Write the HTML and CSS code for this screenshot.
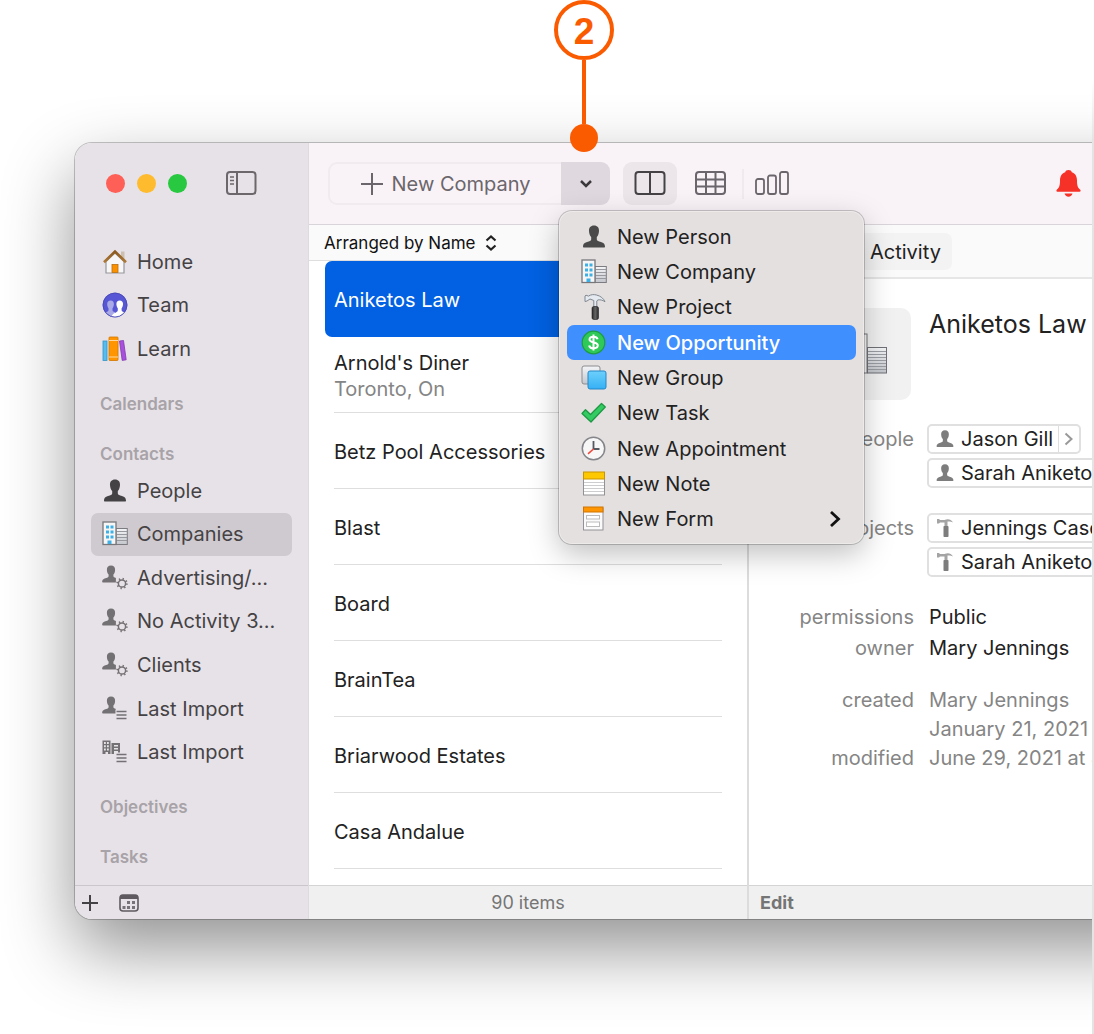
FILE: index.html
```html
<!DOCTYPE html>
<html lang="en">
<head>
<meta charset="utf-8">
<meta name="viewport" content="width=device-width, initial-scale=1">
<title>Companies</title>
<link rel="stylesheet" href="styles.css">
</head>
<body>
<svg class="sprite" aria-hidden="true">
  <defs>
    <linearGradient id="g-steel" x1="0" y1="0" x2="0" y2="1"><stop offset="0" stop-color="#f4f5f7"/><stop offset="1" stop-color="#c3c6cc"/></linearGradient>
    <linearGradient id="g-blue" x1="0" y1="0" x2="0" y2="1"><stop offset="0" stop-color="#6dd0fb"/><stop offset="1" stop-color="#35b0f5"/></linearGradient>
    <linearGradient id="g-roof" x1="0" y1="0" x2="0" y2="1"><stop offset="0" stop-color="#8a5a1e"/><stop offset="1" stop-color="#b07a38"/></linearGradient>
    <linearGradient id="g-handle" x1="0" y1="0" x2="1" y2="0"><stop offset="0" stop-color="#2a2a2a"/><stop offset=".5" stop-color="#666"/><stop offset="1" stop-color="#2a2a2a"/></linearGradient>
    <clipPath id="c-team"><circle cx="13" cy="13" r="12"/></clipPath>
  </defs>
  <symbol id="person" viewBox="0 0 26 26"><path d="M13 1.500c3.400 0 5.200 2.200 5 5.600-.1 2.600-.9 4.700-2.200 6v2.200c0 1.400 1.200 1.900 3.200 2.500 3 .9 4.800 1.600 5 4.700 0 .6-.3 1-1 1H3c-.7 0-1-.4-1-1 .2-3.100 2-3.800 5-4.700 2-.6 3.200-1.100 3.200-2.500v-2.200C8.900 11.800 8.100 9.700 8 7.100 7.800 3.700 9.600 1.500 13 1.500z" fill="currentColor"/></symbol>
  <symbol id="company" viewBox="0 0 26 26">
    <rect x="14" y="7.500" width="11.300" height="16" fill="url(#g-steel)" stroke="#7b7b80"/>
    <path d="M14.500 10.500h10.500M14.500 13.500h10.500M14.500 16.500h10.500M14.500 19.500h10.500" stroke="#97999f"/>
    <rect x="1" y="1" width="13" height="22.500" fill="#f6f6f6" stroke="#77777b" stroke-width="1.300"/>
    <path d="M4 4.500h3v3H4zM8.500 4.500h3v3h-3zM4 9.500h3v3H4zM8.500 9.500h3v3h-3zM4 14.500h3v3H4zM8.500 14.500h3v3h-3zM5.500 19.500h4V23h-4z" fill="#3fb0e6"/>
  </symbol>
  <symbol id="hammer" viewBox="0 0 26 26">
    <path d="M4 2 5 1.200l2.500.9C10 .3 13 .4 15.500 1c4 1 7 3.200 8.500 6.800-2.500-1.800-4.500-2.200-7-1.900l-1.200 1V13h-3V6.500L9 5 6 7 4 7.500z" fill="#e4eaf0" stroke="#7f8790" stroke-width="1"/>
    <rect x="11" y="12.500" width="6.500" height="13" rx="1.800" fill="url(#g-handle)" stroke="#222" stroke-width=".6"/>
  </symbol>
  <symbol id="hammer-flat" viewBox="0 0 20 20"><path d="M2 1h2l1 1h4.500C13 .7 16 1.200 18 4.500c-2-1-3.500-1.100-5.500-.9V8h-3V4.500H5l-1 .9H2z" fill="#a4a4a4"/><rect x="8.500" y="8" width="5" height="11" rx=".8" fill="#7d7d7d"/></symbol>
  <symbol id="dollar" viewBox="0 0 26 26"><circle cx="12.500" cy="12.500" r="11.300" fill="#2fc95a" stroke="#1e9c42" stroke-width="1.200"/><path d="M16.600 9.300c-.5-1.700-2-2.600-4.100-2.600-2.300 0-4 1.100-4 2.900 0 4 8.300 1.700 8.300 5.700 0 1.900-1.800 3.100-4.300 3.100-2.400 0-4-1-4.400-2.900M12.500 4.500v16" fill="none" stroke="#fff" stroke-width="2"/></symbol>
  <symbol id="group" viewBox="0 0 26 26"><rect x="1" y="1" width="18" height="18" rx="2" fill="url(#g-steel)" stroke="#8c8c90"/><rect x="7" y="6" width="18" height="18" rx="2" fill="url(#g-blue)" stroke="#2586c8"/></symbol>
  <symbol id="task" viewBox="0 0 26 26"><path d="M1 13.500 4.500 9.700 9.500 14.500 20.500 3.500 24.300 7 10 22z" fill="#35cb63" stroke="#1e9845" stroke-width="1.300" stroke-linejoin="round"/></symbol>
  <symbol id="clock" viewBox="0 0 26 26"><circle cx="12.500" cy="12.500" r="11.200" fill="#f8f7f7" stroke="#84858a" stroke-width="1.500"/><path d="M12.500 5v8M12.500 13h6" stroke="#555a63" stroke-width="1.800"/><path d="m12.500 13-5.500 4.800" stroke="#f0473c" stroke-width="1.600"/></symbol>
  <symbol id="note" viewBox="0 0 26 26"><rect x="2.500" y="2" width="21" height="22" fill="#fff" stroke="#929296"/><path d="M3 11.500h20M3 14.500h20M3 17.500h20M3 20.500h20" stroke="#cdcdcf"/><rect x="2.500" y="1" width="21" height="7" fill="#fdc800" stroke="#c89400"/></symbol>
  <symbol id="form" viewBox="0 0 26 26"><rect x="2.500" y="2" width="19.500" height="22" fill="#fafafa" stroke="#929296"/><rect x="5.500" y="9.500" width="13" height="3.500" fill="#fff" stroke="#bbb"/><rect x="5.500" y="16" width="13" height="4.500" fill="#fff" stroke="#bbb"/><rect x="2.500" y="1" width="19.500" height="5" fill="#ff9500" stroke="#d07400"/></symbol>
  <symbol id="home" viewBox="0 0 26 26"><path d="M19 2.500h3.500v8H19z" fill="#cdbfb0"/><path d="M4 12.500 13 4l9 8.500V24H4z" fill="#f7f7f7" stroke="#97979b" stroke-width="1.200"/><rect x="10" y="15.500" width="6" height="8" fill="#fb9100" stroke="#b96e10" stroke-width=".8"/><path d="m2 13.300 11-10.800 11 10.800" fill="none" stroke="url(#g-roof)" stroke-width="2.600"/></symbol>
  <symbol id="team" viewBox="0 0 26 26"><circle cx="13" cy="13" r="12.300" fill="#5757d6"/><g clip-path="url(#c-team)"><path d="M8.700 8.500c2.200 0 3.300 1.500 3.200 3.800-.1 1.800-.6 3-1.400 3.900v2c0 1 1 1.500 2.500 2v6H0v-4c1-2 6.500-1.800 6.500-4v-2c-.8-.9-1.200-2.100-1.300-3.900-.1-2.300 1.200-3.800 3.500-3.800z" fill="#aaaae6"/><path d="M17.700 8.500c2.200 0 3.500 1.500 3.300 3.800-.1 1.800-.6 3-1.400 3.900v2c0 2.200 5.400 2 6.400 4v4H9.500c-.3-6 6.300-5 6.300-8v-2c-.8-.9-1.300-2.100-1.400-3.900-.1-2.300 1.100-3.800 3.300-3.800z" fill="#fff"/></g><circle cx="13" cy="13" r="12" fill="none" stroke="#4646b0" stroke-width=".8"/></symbol>
  <symbol id="books" viewBox="0 0 26 26"><rect x="1" y="5" width="4" height="19.500" fill="#55bdf0" stroke="#3193c6" stroke-width=".8"/><rect x="7" y="1" width="9" height="23.500" rx=".8" fill="#ff9500" stroke="#d27600" stroke-width=".8"/><path d="M7 4.500h9M7 21h9" stroke="#ffd9a0"/><path d="m17.500 5 4-.5 2.700 19.300-4 .6z" fill="#a94fdd" stroke="#8437b2" stroke-width=".8"/></symbol>
  <symbol id="person-small" viewBox="0 0 26 26"><path d="M9 .5c2.800 0 4.200 1.800 4.100 4.400-.1 2-.7 3.500-1.700 4.500v1.700c0 1.100 1 1.500 2.500 1.900v4.500H1c-.6 0-.9-.3-.9-.8.300-2.400 1.800-2.900 4.100-3.600 1.500-.5 2.400-.9 2.400-2V9.400c-1-1-1.600-2.500-1.700-4.500C4.800 2.300 6.200.5 9 .5z" fill="#747174"/></symbol>
  <symbol id="person-gear" viewBox="0 0 26 26"><use href="#person-small" width="26" height="26"/><circle cx="20" cy="18.500" r="6" fill="#e7e2e7"/><circle cx="20" cy="18.500" r="3.600" fill="none" stroke="#747174" stroke-width="1.500"/><circle cx="20" cy="18.500" r="4.700" fill="none" stroke="#747174" stroke-width="2" stroke-dasharray="1.300 2.391"/></symbol>
  <symbol id="person-lines" viewBox="0 0 26 26"><use href="#person-small" width="26" height="26"/><path d="M13.500 13.500h12v11h-12z" fill="#e7e2e7"/><path d="M14.500 15.500h10M14.500 19h10M14.500 22.500h10" stroke="#747174" stroke-width="1.400"/></symbol>
  <symbol id="company-lines" viewBox="0 0 26 26"><path fill-rule="evenodd" d="M.5 1.500h8V15H6v-2H3.500v2h-3zM2 3v2h1.800V3zm3 0v2h1.800V3zM2 6.200v2h1.800v-2zm3 0v2h1.800v-2zM2 9.400v2h1.800v-2zm3 0v2h1.800v-2zM9.500 4h8.500v9.500h-2V12h-4v3H9.500zM12 6v1.500h4V6zM12 9v1.500h4V9z" fill="#747174"/><path d="M14.500 15.500h10M14.500 19h10M14.500 22.500h10" stroke="#747174" stroke-width="1.400"/></symbol>
</svg>

<div class="stage">
  <div class="callout" aria-hidden="true">
    <span class="callout-number">2</span>
    <span class="callout-line"></span>
    <span class="callout-dot"></span>
  </div>

  <div class="window">
    <aside class="sidebar">
      <div class="titlebar">
        <span class="light light-red"></span>
        <span class="light light-yellow"></span>
        <span class="light light-green"></span>
        <button class="icon-button sidebar-toggle" aria-label="Toggle sidebar">
          <svg width="32" height="26" viewBox="0 0 32 26" fill="none" stroke="#6b676b" stroke-width="2"><rect x="2" y="1" width="28.500" height="22" rx="3"/><path d="M12 1v22"/><path d="M5 6h4M5 9.500h4M5 13h4" stroke-width="1.500"/></svg>
        </button>
      </div>
      <nav class="nav">
        <ul class="nav-list nav-main">
          <li><a href="#"><svg class="icon"><use href="#home"/></svg>Home</a></li>
          <li><a href="#"><svg class="icon"><use href="#team"/></svg>Team</a></li>
          <li><a href="#"><svg class="icon"><use href="#books"/></svg>Learn</a></li>
        </ul>
        <h2>Calendars</h2>
        <h2>Contacts</h2>
        <ul class="nav-list nav-contacts">
          <li><a href="#"><svg class="icon"><use href="#person"/></svg>People</a></li>
          <li><a href="#" class="current"><svg class="icon"><use href="#company"/></svg>Companies</a></li>
          <li><a href="#"><svg class="icon"><use href="#person-gear"/></svg>Advertising/...</a></li>
          <li><a href="#"><svg class="icon"><use href="#person-gear"/></svg>No Activity 3...</a></li>
          <li><a href="#"><svg class="icon"><use href="#person-gear"/></svg>Clients</a></li>
          <li><a href="#"><svg class="icon"><use href="#person-lines"/></svg>Last Import</a></li>
          <li><a href="#"><svg class="icon"><use href="#company-lines"/></svg>Last Import</a></li>
        </ul>
        <h2>Objectives</h2>
        <h2>Tasks</h2>
      </nav>
      <div class="statusbar sidebar-status">
        <button class="icon-button" aria-label="Add"><svg width="18" height="18" viewBox="0 0 18 18" stroke="#454245" stroke-width="2"><path d="M9 1v16M1 9h16"/></svg></button>
        <button class="icon-button" aria-label="Show calendar"><svg width="20" height="18" viewBox="0 0 20 18"><rect x="1" y="1" width="18" height="16" rx="3" fill="none" stroke="#5f5a5f" stroke-width="1.600"/><path d="M1 5V3.500Q1 1 3.500 1h13Q19 1 19 3.500V5z" fill="#5f5a5f"/><path d="M8 7h3v3H8zM13 7h3v3h-3zM3.500 12h3v3h-3zM8 12h3v3H8zM13 12h3v3h-3z" fill="#777277"/></svg></button>
      </div>
    </aside>

    <div class="main">
      <header class="toolbar">
        <div class="split">
          <button class="split-main"><svg width="22" height="22" viewBox="0 0 22 22" stroke="#6b666b" stroke-width="2"><path d="M11 0v22M0 11h22"/></svg>New Company</button>
          <button class="split-more" aria-label="More new items" aria-expanded="true"><svg width="14" height="10" viewBox="0 0 14 10" fill="none" stroke="#3b383b" stroke-width="2.500"><path d="m2 2 5 5 5-5"/></svg></button>
          <div class="menu" role="menu">
            <button role="menuitem"><svg class="icon dark"><use href="#person"/></svg>New Person</button>
            <button role="menuitem"><svg class="icon"><use href="#company"/></svg>New Company</button>
            <button role="menuitem"><svg class="icon"><use href="#hammer"/></svg>New Project</button>
            <button role="menuitem" class="active"><svg class="icon"><use href="#dollar"/></svg>New Opportunity</button>
            <button role="menuitem"><svg class="icon"><use href="#group"/></svg>New Group</button>
            <button role="menuitem"><svg class="icon"><use href="#task"/></svg>New Task</button>
            <button role="menuitem"><svg class="icon"><use href="#clock"/></svg>New Appointment</button>
            <button role="menuitem"><svg class="icon"><use href="#note"/></svg>New Note</button>
            <button role="menuitem"><svg class="icon"><use href="#form"/></svg>New Form<svg class="submenu" width="12" height="16" viewBox="0 0 12 16" fill="none" stroke="#111" stroke-width="2.800"><path d="m2 1 7.500 7L2 15"/></svg></button>
          </div>
        </div>
        <div class="views">
          <button class="view view-on" aria-label="Split view"><svg width="32" height="26" viewBox="0 0 32 26" fill="none" stroke="#454245" stroke-width="2"><rect x="1.500" y="1" width="29" height="22" rx="3"/><path d="M16 1v22"/></svg></button>
          <button class="view" aria-label="Table view"><svg width="32" height="26" viewBox="0 0 32 26" fill="none" stroke="#6b666b" stroke-width="2"><rect x="2" y="1" width="29" height="22" rx="3"/><path d="M12 1v22M21.500 1v22M2 8.500h29M2 15.500h29"/></svg></button>
          <span class="views-divider"></span>
          <button class="view" aria-label="Chart view"><svg width="34" height="26" viewBox="0 0 34 26" fill="none" stroke="#6b666b" stroke-width="1.800"><rect x="1" y="8" width="8" height="15" rx="2"/><rect x="13" y="4.500" width="8" height="18.500" rx="2"/><rect x="25" y="1" width="8" height="22" rx="2"/></svg></button>
        </div>
        <button class="icon-button bell" aria-label="Notifications"><svg width="25" height="28" viewBox="0 0 25 28" fill="#f63127"><path d="M12.500 0c1.800 0 3 .9 3.300 2.200 3.600 1.200 5.200 4.300 5.200 8.300 0 5 .8 7.300 3 9 1 .8.800 2.200-.5 2.200h-22C.2 21.700 0 20.300 1 19.500c2.200-1.700 3-4 3-9 0-4 1.600-7.100 5.200-8.300C9.500.9 10.700 0 12.500 0z"/><path d="M8.500 23.500h8c-.5 2-2 3.200-4 3.200s-3.500-1.200-4-3.200z"/></svg></button>
      </header>

      <div class="panes">
        <section class="list-pane">
          <button class="sort">Arranged by Name<svg width="12" height="16" viewBox="0 0 12 16" fill="none" stroke="#222" stroke-width="2.200"><path d="m1.500 5.500 4.500-4 4.500 4M1.500 10.500l4.500 4 4.500-4"/></svg></button>
          <ul class="companies">
            <li class="selected"><a href="#">Aniketos Law</a></li>
            <li><a href="#">Arnold's Diner<small>Toronto, On</small></a></li>
            <li><a href="#">Betz Pool Accessories</a></li>
            <li><a href="#">Blast</a></li>
            <li><a href="#">Board</a></li>
            <li><a href="#">BrainTea</a></li>
            <li><a href="#">Briarwood Estates</a></li>
            <li><a href="#">Casa Andalue</a></li>
          </ul>
          <footer class="statusbar list-status">90 items</footer>
        </section>

        <section class="detail-pane">
          <div class="tabs"><button class="tab">Activity</button></div>
          <div class="detail">
            <div class="profile">
              <div class="avatar"><svg width="44" height="48" viewBox="0 0 44 48"><rect x="1" y="4" width="23" height="39" fill="#f6f6f6" stroke="#77777b"/><rect x="24.500" y="17.500" width="19" height="25.500" fill="url(#g-steel)" stroke="#6f7176"/><path d="M25 21.500h18M25 24.500h18M25 27.500h18M25 30.500h18M25 33.500h18M25 36.500h18M25 39.500h18" stroke="#9a9da3"/></svg></div>
              <h1>Aniketos Law</h1>
            </div>
            <dl class="fields">
              <div class="field field-links"><dt>people</dt><dd>
                <div class="chip"><a href="#"><svg class="chip-icon"><use href="#person"/></svg>Jason Gill</a><button aria-label="Open Jason Gill"><svg width="10" height="14" viewBox="0 0 10 14" fill="none" stroke="#999" stroke-width="2"><path d="m1.500 1.500 6 5.500-6 5.500"/></svg></button></div>
                <div class="chip"><a href="#"><svg class="chip-icon"><use href="#person"/></svg>Sarah Aniketo</a></div>
              </dd></div>
              <div class="field field-links"><dt>projects</dt><dd>
                <div class="chip"><a href="#"><svg class="chip-icon"><use href="#hammer-flat"/></svg>Jennings Case</a></div>
                <div class="chip"><a href="#"><svg class="chip-icon"><use href="#hammer-flat"/></svg>Sarah Aniketo</a></div>
              </dd></div>
              <div class="field"><dt>permissions</dt><dd>Public</dd></div>
              <div class="field"><dt>owner</dt><dd>Mary Jennings</dd></div>
              <div class="field field-history"><dt>created</dt><dd>Mary Jennings<br>January 21, 2021</dd></div>
              <div class="field field-history"><dt>modified</dt><dd>June 29, 2021 at 4</dd></div>
            </dl>
          </div>
          <footer class="statusbar"><button class="edit">Edit</button></footer>
        </section>
      </div>
    </div>
  </div>
</div>
</body>
</html>
```
FILE: styles.css
```css
* { box-sizing: border-box; }

body {
  margin: 0;
  background: #fff;
  color: #222;
  font: 400 20px/26px Inter, "Liberation Sans", sans-serif;
}

h1, h2, ul, dl, dd { margin: 0; padding: 0; }
ul { list-style: none; }
a { color: inherit; text-decoration: none; }
svg { display: block; flex: none; }

button {
  padding: 0;
  border: 0;
  background: none;
  color: inherit;
  font: inherit;
}

.sprite { position: absolute; width: 0; height: 0; }
.icon { width: 26px; height: 26px; }
.dark { color: #4a4a4a; }
.icon-button { display: flex; }

.stage {
  position: relative;
  min-height: 100vh;
  padding: 143px 2px 0 75px;
  overflow: hidden;
}

.stage::after {
  content: "";
  position: absolute;
  inset: 80px 0 0 auto;
  width: 2px;
  background: linear-gradient(#fff, #e4e4e4 60px);
}

/* Numbered pointer over the drop-down button */
.callout {
  position: absolute;
  z-index: 3;
  top: 0;
  left: 554px;
  display: flex;
  flex-direction: column;
  align-items: center;
  color: #fa5b00;
}

.callout-number {
  width: 60px;
  height: 60px;
  border: 4px solid;
  border-radius: 50%;
  font: 700 37px/56px "Liberation Sans", sans-serif;
  text-align: center;
}

.callout-line { width: 4px; height: 64px; background: currentColor; }
.callout-dot { width: 28px; height: 28px; border-radius: 50%; background: currentColor; }

.window {
  position: relative;
  display: flex;
}

/* The frame runs on past the right edge of the stage */
.window::before {
  content: "";
  position: absolute;
  inset: 0 -120px 0 0;
  border-radius: 17px;
  box-shadow: 0 0 0 1px rgba(0, 0, 0, .22), 0 30px 70px rgba(0, 0, 0, .43);
}

/* Sidebar */
.sidebar {
  position: relative;
  display: flex;
  flex: none;
  flex-direction: column;
  width: 234px;
  border-right: 1px solid #dfdadf;
  border-radius: 17px 0 0 17px;
  background: #e7e2e7;
  color: #454245;
}

.titlebar {
  display: flex;
  align-items: center;
  gap: 12px;
  height: 81px;
  padding-left: 31px;
}

.light { width: 19px; height: 19px; border-radius: 50%; }
.light-red { background: #fe5f57; }
.light-yellow { background: #febb2e; }
.light-green { background: #28c840; }
.sidebar-toggle { margin-left: 26px; }

.nav { flex: 1; padding: 16px 16px 0; }
.nav-list { display: grid; grid-auto-rows: 1fr; }
.nav-main { height: 131px; }
.nav-contacts { height: 305px; }

.nav-list a {
  display: flex;
  align-items: center;
  gap: 9px;
  height: 100%;
  padding-left: 11px;
  border-radius: 7px;
  white-space: nowrap;
}

.nav-list .current { background: #cfcacf; }

.nav h2 {
  padding: 21px 9px 5px;
  color: #a8a3a8;
  font-size: 17px;
  font-weight: 600;
  line-height: 24px;
}

.nav h2 + h2 { padding-bottom: 3px; }

.statusbar {
  display: flex;
  align-items: center;
  height: 34px;
  border-top: 1px solid #d4d4d4;
  background: #f0f0f0;
  color: #757575;
  font-size: 18px;
}

.sidebar-status {
  gap: 20px;
  padding-left: 6px;
  border-color: #cbc6cb;
  border-radius: 0 0 0 17px;
  background: none;
}

/* Toolbar */
.main {
  position: relative;
  display: flex;
  flex: 1;
  flex-direction: column;
  min-width: 0;
}

.toolbar {
  display: flex;
  align-items: center;
  height: 82px;
  padding: 0 11px 0 19px;
  border-bottom: 1px solid #d9d4d9;
  background: #f9f3f8;
}

.split { position: relative; display: flex; height: 43px; }

.split-main {
  display: flex;
  align-items: center;
  justify-content: center;
  gap: 9px;
  width: 233px;
  border: 2px solid #f1ebf0;
  border-right: 0;
  border-radius: 9px 0 0 9px;
  color: #6b666b;
}

.split-more {
  display: flex;
  align-items: center;
  justify-content: center;
  width: 49px;
  border-radius: 0 9px 9px 0;
  background: #dfd9df;
}

.views { display: flex; align-items: center; gap: 6px; margin-left: 13px; }

.view {
  display: flex;
  align-items: center;
  justify-content: center;
  width: 54px;
  height: 43px;
  border-radius: 9px;
}

.view-on { background: #ece6eb; }
.views-divider { width: 2px; height: 30px; margin: 0 -5px 0 -1px; background: #f0eaef; }
.bell { margin-left: auto; }

/* Drop-down menu */
.menu {
  position: absolute;
  z-index: 2;
  top: 49px;
  left: 231px;
  display: grid;
  grid-auto-rows: 1fr;
  width: 305px;
  height: 333px;
  padding: 8px 8px 7px;
  border-radius: 13px;
  background: #e4e0df;
  box-shadow: 0 0 0 1px rgba(0, 0, 0, .2), inset 0 0 0 1px rgba(255, 255, 255, .35), 0 10px 30px rgba(0, 0, 0, .25);
}

.menu button {
  display: flex;
  align-items: center;
  gap: 10px;
  padding: 0 15px 0 14px;
  border-radius: 7px;
  text-align: left;
}

.menu .active { background: #408fff; color: #fff; font-weight: 500; }
.submenu { margin-left: auto; }

/* Company list */
.panes { display: flex; flex: 1; }

.list-pane {
  display: flex;
  flex: none;
  flex-direction: column;
  width: 440px;
  border-right: 2px solid #dcdcdc;
  background: #fff;
}

.sort {
  display: flex;
  align-items: center;
  gap: 10px;
  height: 36px;
  padding-left: 15px;
  border-bottom: 1px solid #dedede;
  background: #fafafa;
  color: #111;
  font-size: 17px;
}

.companies { flex: 1; padding: 0 16px 16px; }

.companies a {
  display: flex;
  flex-direction: column;
  justify-content: center;
  height: 76px;
  margin: 0 9px;
  padding-top: 2px;
  border-bottom: 1px solid #dedede;
}

.companies small { color: #858585; font-size: inherit; }
.companies .selected { border-radius: 7px; background: #0161e2; color: #fff; }
.companies .selected a { border-color: transparent; }
.list-status { justify-content: center; }

/* Detail */
.detail-pane {
  display: flex;
  flex: 1;
  flex-direction: column;
  min-width: 0;
  overflow: hidden;
  background: #fff;
}

.tabs {
  height: 54px;
  padding: 8px 0 0 110px;
  border-bottom: 2px solid #e6e6e6;
  background: #fafafa;
}

.tab {
  height: 37px;
  padding: 0 11px;
  border-radius: 7px;
  background: #f3f3f3;
}

.detail { flex: 1; padding-top: 29px; white-space: nowrap; }
.profile { display: flex; gap: 18px; padding-left: 70px; }

.avatar {
  display: flex;
  align-items: center;
  justify-content: center;
  width: 92px;
  height: 92px;
  border-radius: 10px;
  background: #f1f1f1;
}

.profile h1 { font-size: 25px; font-weight: 400; line-height: 32px; }

.fields { padding-top: 24px; }
.field { display: flex; gap: 15px; line-height: 31px; }
.field dt { flex: none; width: 165px; color: #858585; text-align: right; }
.field-links { gap: 13px; padding-bottom: 25px; }
.field-links dd { display: flex; flex-direction: column; align-items: flex-start; gap: 4px; }
.field-history { color: #858585; line-height: 29px; }
.field:not(.field-history) + .field-history { padding-top: 22px; }

.chip {
  display: flex;
  height: 30px;
  border: 2px solid #e0e0e0;
  border-radius: 5px;
}

.chip a {
  display: flex;
  align-items: center;
  gap: 6px;
  padding: 0 5px 0 6px;
  line-height: 26px;
}

.chip-icon { width: 20px; height: 20px; color: #7d7d7d; }
.chip button { display: flex; align-items: center; padding: 0 5px; border-left: 1px solid #dedede; }

.edit { padding: 0 11px; font-weight: 700; }
```
